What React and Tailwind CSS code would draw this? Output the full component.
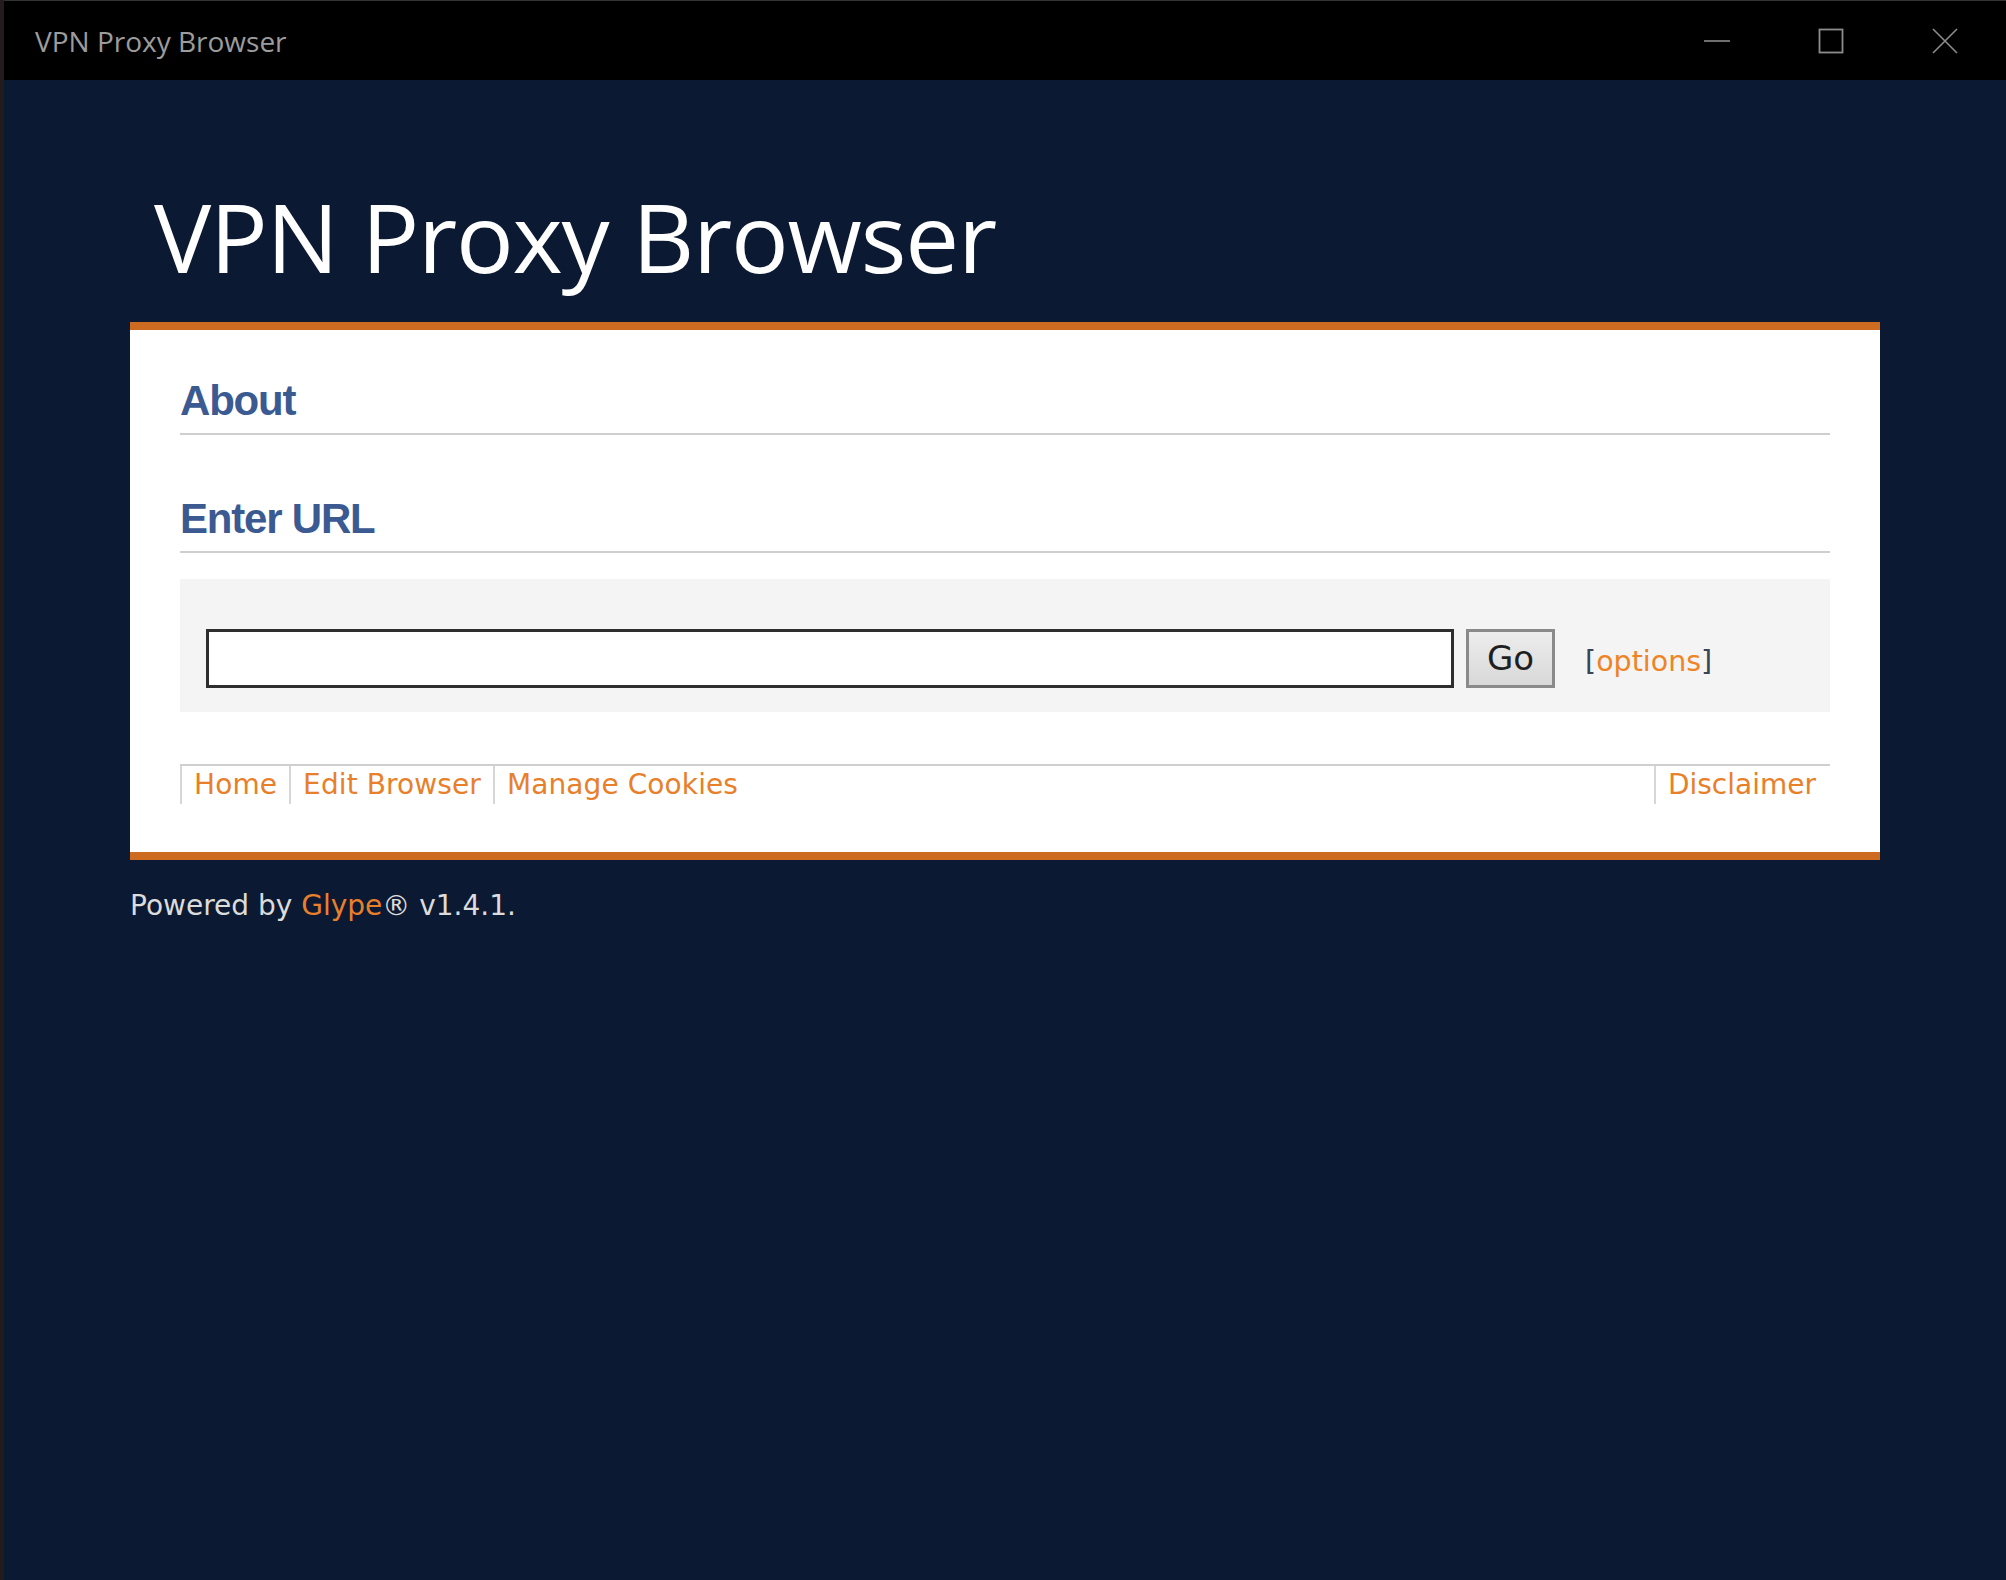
import React, { useState } from "react";

const navLinks = ["Home", "Edit Browser", "Manage Cookies"];

const tahoma = { fontFamily: '"DejaVu Sans", Verdana, sans-serif' };

const App = () => {
  const [url, setUrl] = useState("");

  return (
    <div className="min-h-[1580px] w-full bg-[#0c1932] border-l-4 border-[#221d1c] flex flex-col">
      {/* Title bar */}
      <div className="h-[80px] bg-black border-t border-[#333] flex items-center">
        <span
          className="ml-[31px] text-[28px] text-[#9c9c9c]"
          style={{ fontFamily: '"Open Sans", sans-serif' }}
        >
          VPN Proxy Browser
        </span>
        <div className="ml-auto flex h-full pr-[4px]">
          <button className="w-[114px] h-full flex items-center justify-center">
            <svg width="26" height="26" viewBox="0 0 26 26">
              <line x1="0" y1="13" x2="26" y2="13" stroke="#8c8c8c" strokeWidth="1.6" />
            </svg>
          </button>
          <button className="w-[114px] h-full flex items-center justify-center">
            <svg width="26" height="26" viewBox="0 0 26 26">
              <rect x="1.5" y="1.5" width="23" height="23" fill="none" stroke="#8c8c8c" strokeWidth="1.8" />
            </svg>
          </button>
          <button className="w-[114px] h-full flex items-center justify-center">
            <svg width="26" height="26" viewBox="0 0 26 26">
              <path d="M1 1 L25 25 M25 1 L1 25" stroke="#8c8c8c" strokeWidth="1.6" />
            </svg>
          </button>
        </div>
      </div>

      {/* Page */}
      <div className="w-[1750px] mx-auto">
        <h1
          className="mt-[108px] ml-[24px] text-[96px] leading-none text-white tracking-[-1.2px]"
          style={{ fontFamily: '"Open Sans", sans-serif' }}
        >
          VPN Proxy Browser
        </h1>

        {/* Card */}
        <div className="mt-[38px] bg-white border-y-[8px] border-[#cd6b21] px-[50px] pt-[47px] pb-[48px]">
          <h2
            className="text-[42px] leading-[48px] font-bold text-[#3b5a92] pb-[8px] border-b-2 border-[#cfcfcf] tracking-[-1.2px]"
            style={{ fontFamily: '"Liberation Sans", Arial, sans-serif' }}
          >
            About
          </h2>
          <h2
            className="mt-[60px] text-[42px] leading-[48px] font-bold text-[#3b5a92] pb-[8px] border-b-2 border-[#cfcfcf] tracking-[-1.2px]"
            style={{ fontFamily: '"Liberation Sans", Arial, sans-serif' }}
          >
            Enter URL
          </h2>

          {/* URL form */}
          <form
            className="mt-[26px] bg-[#f4f4f4] pt-[50px] pb-[24px] pl-[26px] flex items-center"
            onSubmit={(e) => e.preventDefault()}
          >
            <input
              type="text"
              value={url}
              onChange={(e) => setUrl(e.target.value)}
              className="w-[1248px] h-[59px] bg-white border-[3px] border-[#2e2e2e] outline-none px-2 text-[26px]"
              style={tahoma}
            />
            <button
              type="submit"
              className="ml-[12px] w-[89px] h-[59px] border-[3px] border-[#8a8a8a] bg-linear-to-b from-[#ededed] to-[#d8d8d8] text-[34px] text-[#1f1f1f] flex items-center justify-center"
              style={tahoma}
            >
              Go
            </button>
            <span className="ml-[30px] pt-[8px] text-[28.5px] text-[#3a4456]" style={tahoma}>
              [<span className="text-[#ee8426]">options</span>]
            </span>
          </form>

          {/* Footer nav */}
          <ul className="mt-[52px] border-t-2 border-[#cfcfcf] flex" style={tahoma}>
            {navLinks.map((link) => (
              <li
                key={link}
                className="border-l-2 border-[#d6d6d6] px-[12px] h-[38px] flex items-center text-[28px] tracking-[0.1px] text-[#e8802b]"
              >
                {link}
              </li>
            ))}
            <li className="ml-auto border-l-2 border-[#d6d6d6] pl-[12px] pr-[14px] h-[38px] flex items-center text-[28px] text-[#e8802b]">
              Disclaimer
            </li>
          </ul>
        </div>

        <p className="mt-[29px] text-[28px] leading-[34px] text-[#dcdcdc]" style={tahoma}>
          Powered by <span className="text-[#e8802b]">Glype</span>® v1.4.1.
        </p>
      </div>
    </div>
  );
};

export default App;
